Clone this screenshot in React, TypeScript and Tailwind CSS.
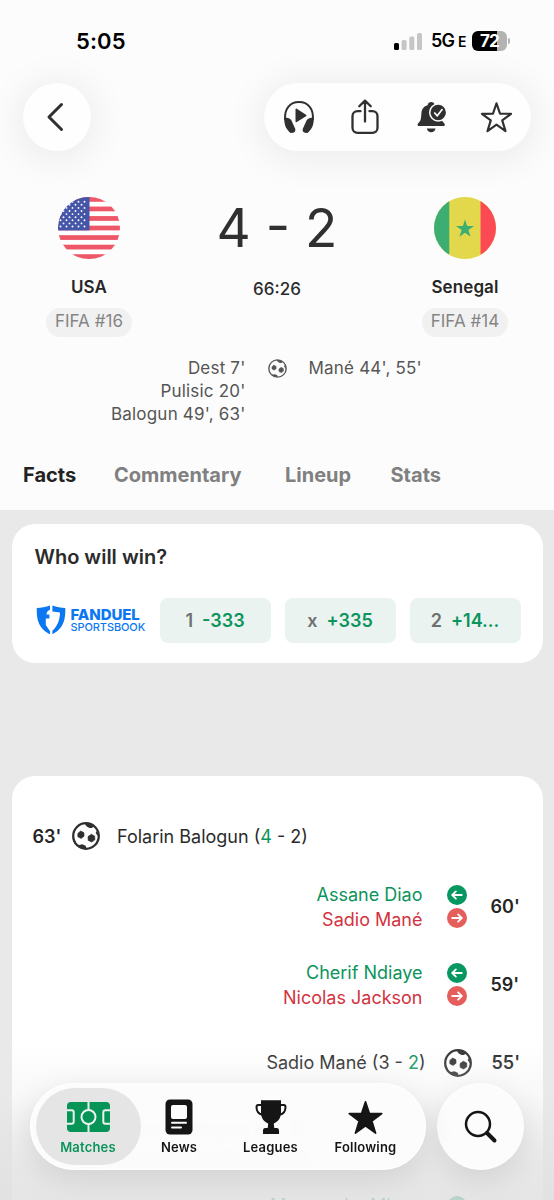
import type { ReactNode } from "react";

function Ball({ size, color = "#2f2f2f", stroke = 2.3 }: { size: number; color?: string; stroke?: number }) {
  return (
    <svg width={size} height={size} viewBox="0 0 28 28" fill={color} className="block shrink-0">
      <circle cx="14" cy="14" r="12.8" fill="none" stroke={color} strokeWidth={stroke} />
      <path d="M5.8 11.4 8.6 9l3.3 1.6.2 3.6-3 2.2-3.3-1.6z" stroke={color} strokeWidth=".6" strokeLinejoin="round" />
      <path d="m16 14.6 3.3-2.4 3.4 1.8.2 3.8-3.2 2.3-3.5-1.7z" stroke={color} strokeWidth=".6" strokeLinejoin="round" />
      <path d="M12.6 1.6c3.4-.5 6.400.3 9 2.400l-1.400 1.900-2.700.100-2.800-1.600z" />
      <path d="m4.300 22.400 2.900.6 3-.7 3.500 1.500.7 2.500c-3.700.500-7.300-.6-10.100-3.900z" />
      <path d="m25.200 8.500-1.600 2.400 2.900 4zM1.600 16l1.900 3.600L4 22z" />
    </svg>
  );
}

function Headphones() {
  return (
    <svg width="32" height="34" viewBox="0 0 32 34" fill="#303030" className="block">
      <path d="M2.200 20C1 8.800 7 2.100 16 2.100S31 8.800 29.800 20" fill="none" stroke="#303030" strokeWidth="2" />
      <path d="M1.200 17.500c2.600.2 5.300.6 7 2.500l4 8.700c.6 1.800-.2 3.500-2.200 4l-2.500.2C3.700 29.800 1 25.800 1.200 17.500z" />
      <path d="M30.800 17.500c-2.600.2-5.300.6-7 2.500l-4 8.700c-.6 1.800.2 3.500 2.200 4l2.500.2c3.800-3.100 6.500-7.100 6.300-15.400z" />
      <path d="M12.500 9.500v11.700c0 .8.700 1.200 1.300.8l9.200-5.700c.6-.4.6-1.200 0-1.600l-9.200-6c-.6-.4-1.300 0-1.300.8z" />
    </svg>
  );
}

function Share() {
  return (
    <svg width="30" height="36" viewBox="0 0 30 36" fill="none" stroke="#303030" strokeWidth="2.300" strokeLinecap="round" strokeLinejoin="round" className="block">
      <path d="M10.500 12.200H7.500a5 5 0 0 0-5 5v11.600a5 5 0 0 0 5 5h15a5 5 0 0 0 5-5V17.200a5 5 0 0 0-5-5h-3M15 22.500V2M9.300 7.300 15 1.600l5.700 5.700" />
    </svg>
  );
}

function BellCheck() {
  return (
    <svg width="32" height="32" viewBox="0 0 32 32" className="block">
      <path d="M1.600 23.800c0-1 .6-1.600 1.500-2.500 2-2 2-4.500 2.300-9 .3-4.300 2.700-7 6.200-8 .4-2 1.700-3.200 3.600-3.200s3.200 1.200 3.600 3.200c4.200 1.300 5.700 4.500 5.900 9.200.2 4 .6 5.800 2.600 7.800.8.900 1.500 1.500 1.500 2.500 0 .8-.5 1.200-1.400 1.200H3c-.9 0-1.400-.4-1.400-1.200z" fill="#303030" />
      <path d="M10.800 27.500h8.800c-.6 2.500-2.200 3.700-4.400 3.700s-3.800-1.200-4.400-3.700z" fill="#303030" />
      <circle cx="22.200" cy="11.500" r="9.200" fill="#fdfdfd" />
      <circle cx="22.200" cy="11.500" r="7.700" fill="#303030" />
      <path d="m18.700 12 2.600 2.800 4.800-6.200" fill="none" stroke="#fff" strokeWidth="1.700" strokeLinecap="round" strokeLinejoin="round" />
    </svg>
  );
}

function Star({ size, filled }: { size: number; filled?: boolean }) {
  return (
    <svg width={size} height={size} viewBox="0 0 34 34" fill={filled ? "#151515" : "none"} stroke={filled ? "#151515" : "#303030"} strokeWidth={filled ? 1.600 : 2.200} strokeLinejoin="round" className="block">
      <path d={filled ? "M17 1.800 20.800 13.100 32.800 13.200 23.200 20.400 26.800 32.200 17 25 7.200 32.200 10.800 20.400 1.200 13.200 13.200 13.100z" : "M17 2.300 20.600 13 32 13.200 22.900 20 26.300 31 17 24.400 7.700 31 11.100 20 2 13.200 13.400 13z"} />
    </svg>
  );
}

function UsaFlag() {
  const rows = [0, 1, 2, 3, 4, 5, 6, 7, 8];
  return (
    <svg width="62" height="62" viewBox="0 0 62 62" className="block">
      <clipPath id="usa"><circle cx="31" cy="31" r="31" /></clipPath>
      <g clipPath="url(#usa)">
        <rect width="62" height="62" fill="#fff" />
        {[0, 9.540, 19.080, 28.620, 38.160, 47.700, 57.240].map((y) => <rect key={y} y={y} width="62" height="4.770" fill="#ee5768" />)}
        <rect width="31.500" height="33.400" fill="#4556a8" />
        {rows.map((r) => [0, 1, 2, 3, 4].map((c) => (
          <circle key={r + "-" + c} cx={(r % 2 ? -0.500 : 2.500) + c * 6} cy={4.700 + r * 3.100} r=".95" fill="#fff" />
        )))}
      </g>
    </svg>
  );
}

function SenegalFlag() {
  return (
    <svg width="62" height="62" viewBox="0 0 62 62" className="block">
      <clipPath id="sen"><circle cx="31" cy="31" r="31" /></clipPath>
      <g clipPath="url(#sen)">
        <rect width="62" height="62" fill="#e3d84c" />
        <rect width="15.300" height="62" fill="#3dae72" />
        <rect x="46.500" width="16" height="62" fill="#fc4a54" />
        <path d="m31 22.500 2.100 6.400h6.900l-5.600 4 2.200 6.900L31 35.800l-5.600 4 2.200-6.900-5.600-4h6.900z" fill="#3dae72" />
      </g>
    </svg>
  );
}

function FanDuelShield() {
  return (
    <svg width="30" height="30" viewBox="0 0 30 30" fill="#0b78f2" className="block shrink-0">
      <path d="M.8 3C5.300 2.900 9.800 2.100 14 .6V4.800c-1.600.6-2.900 1.500-3.300 3.400l-.3 1.300h3v4.100H9.800V20l4.200 6.300v3C6 25 .1 19.200.8 3z" />
      <path d="M16.400.6c4.200 1.500 8.400 2.300 12.900 2.400.6 16.200-5 22-12.900 26.300v-3.500c5-4.600 7.400-10.500 7.600-18.300l-7.600-1z" />
    </svg>
  );
}

function SubArrow({ out }: { out?: boolean }) {
  return (
    <svg width="20" height="20" viewBox="0 0 20 20" className="block">
      <circle cx="10" cy="10" r="10" fill={out ? "#e55e5b" : "#079760"} />
      <path d={out ? "M5.200 10h9.400M11.100 6.400l3.700 3.600-3.700 3.600" : "M14.800 10H5.400M8.900 6.400 5.200 10l3.700 3.600"} fill="none" stroke="#fff" strokeWidth="1.800" strokeLinecap="round" strokeLinejoin="round" />
    </svg>
  );
}

function Team({ flag, name, rank }: { flag: ReactNode; name: string; rank: string }) {
  return (
    <div className="flex w-[100px] flex-col items-center">
      {flag}
      <div className="mt-[18px] h-5 text-[17px] leading-5 font-semibold tracking-[0.1px] text-[#262626]">{name}</div>
      <div className="mt-[10.500px] flex h-[29px] w-[86px] items-center justify-center rounded-full bg-[#f1f1f1] text-[17px] tracking-[0.05px] text-[#858585]">{rank}</div>
    </div>
  );
}

function Odd({ label, value }: { label: string; value: string }) {
  return (
    <div className="flex h-[45px] w-[111px] items-center justify-center gap-[9px] rounded-lg bg-[#eaf3f0] text-[18px] font-semibold text-[#0b945b]">
      <span className="text-[#707070]">{label}</span>
      <span>{value}</span>
    </div>
  );
}

function SubRow({ on, off, minute }: { on: string; off: string; minute: string }) {
  return (
    <div className="flex h-[78px] items-center justify-end">
      <div className="text-right text-[18px] leading-[25px] tracking-[0px]">
        <div className="text-[#0b945b]">{on}</div>
        <div className="text-[#d3333e]">{off}</div>
      </div>
      <div className="ml-6 flex flex-col gap-[3px]"><SubArrow /><SubArrow out /></div>
      <div className="ml-[24px] w-[30px] text-[18px] font-semibold text-[#262626]">{minute}</div>
    </div>
  );
}

function NavItem({ icon, label, className, active }: { icon: ReactNode; label: string; className: string; active?: boolean }) {
  return (
    <div className={"flex h-[77px] shrink-0 flex-col items-center rounded-full pt-[11px] " + className}>
      <div className="flex h-[36px] items-center">{icon}</div>
      <div className={"mt-[4px] text-[13px] leading-4 font-semibold tracking-[0.2px] " + (active ? "text-[#0b945b]" : "text-[#151515]")}>{label}</div>
    </div>
  );
}

export default function App() {
  return (
    <div className="relative flex h-[1200px] w-[554px] flex-col overflow-hidden bg-[#e9e9e9] font-['Inter',sans-serif] whitespace-nowrap text-[#2b2b2b]">
      <header className="h-[509.500px] shrink-0 bg-[#fcfcfc]">
        <div className="flex h-[83px] justify-between pr-[44px] pl-[76px]">
          <div className="mt-[27px] h-7 text-[22px] leading-7 font-semibold tracking-[0.1px] text-black">5:05</div>
          <div className="mt-[31px] flex h-5 items-center">
            <svg width="28" height="19" viewBox="0 0 28 19" className="block">
              <rect x="0" y="11" width="5" height="7" rx="1.500" fill="#000" />
              <rect x="7.600" y="8" width="5" height="10" rx="1.500" fill="#c6c6c6" />
              <rect x="15.300" y="4.500" width="5" height="13.500" rx="1.500" fill="#c6c6c6" />
              <rect x="23" y="1" width="5" height="17" rx="1.500" fill="#c6c6c6" />
            </svg>
            <div className="ml-[9px] flex w-[41px] items-baseline text-[18px] leading-5 font-semibold tracking-[-0.9px] text-black">5G<span className="ml-[4px] text-[14px]">E</span></div>
            <div className="flex h-5 w-[35px] overflow-hidden rounded-[6px] bg-[linear-gradient(90deg,#000_72%,#b3b3b3_72%)] pl-[8px] text-[17px] leading-5 font-bold tracking-[-0.8px] text-white">72</div>
            <div className="ml-[1px] h-[6px] w-[2px] rounded-r-full bg-[#b3b3b3]" />
          </div>
        </div>
        <div className="flex justify-between pr-[23px] pl-[22.500px]">
          <div className="flex size-[68px] items-center justify-center rounded-full bg-[#fefefe] shadow-[0_4px_34px_8px_rgba(0,0,0,0.06)]">
            <svg width="18" height="30" viewBox="0 0 18 30" fill="none" stroke="#303030" strokeWidth="3" strokeLinecap="round" strokeLinejoin="round" className="mr-[3px] block"><path d="M15.500 2.500 3 15l12.500 12.500" /></svg>
          </div>
          <div className="flex h-[68px] w-[267.500px] items-center rounded-full bg-[#fefefe] pl-[19px] shadow-[0_4px_34px_8px_rgba(0,0,0,0.06)]">
            <Headphones />
            <div className="ml-[35px]"><Share /></div>
            <div className="ml-[36px]"><BellCheck /></div>
            <div className="ml-[32px]"><Star size={33} /></div>
          </div>
        </div>
        <div className="mt-[46px] flex h-[141px] justify-between px-[39px]">
          <Team flag={<UsaFlag />} name="USA" rank="FIFA #16" />
          <div className="flex flex-col items-center">
            <div className="mt-[1px] h-[60px] text-[53px] leading-[60px] tracking-[0px] text-[#303030]">4 - 2</div>
            <div className="mt-[21px] h-5 text-[17px] leading-5 font-medium">66:26</div>
          </div>
          <Team flag={<SenegalFlag />} name="Senegal" rank="FIFA #14" />
        </div>
        <div className="mt-[19px] flex h-[70px] text-[17px] leading-[23px] tracking-[0.2px] text-[#555]">
          <div className="w-[245.500px] text-right"><div>Dest 7'</div><div>Pulisic 20'</div><div>Balogun 49', 63'</div></div>
          <div className="mt-[2px] ml-[22px]"><Ball size={19} color="#555" stroke={2} /></div>
          <div className="ml-[22px]">Mané 44', 55'</div>
        </div>
        <div className="mt-[34px] flex h-[28px] pl-[23px] text-[20px] leading-7 font-bold text-[#808080]">
          <div className="w-[91px] text-[#222]">Facts</div>
          <div className="w-[171px]">Commentary</div>
          <div className="w-[105.500px]">Lineup</div>
          <div>Stats</div>
        </div>
      </header>

      <section className="mt-[14px] ml-[11.500px] h-[139.500px] w-[531px] shrink-0 rounded-[23px] bg-white">
        <h2 className="pt-[20px] pl-[23px] text-[20px] leading-[26px] font-semibold">Who will win?</h2>
        <div className="mt-[28px] flex items-center pl-[24px]">
          <FanDuelShield />
          <div className="ml-[5px] w-[89px] text-[#0b78f2]">
            <div className="text-[15px] leading-[14px] font-extrabold tracking-[-0.1px]">FANDUEL</div>
            <div className="text-[11px] leading-[11px] font-medium tracking-[-0.1px]">SPORTSBOOK</div>
          </div>
          <div className="flex gap-[14px]"><Odd label="1" value="-333" /><Odd label="x" value="+335" /><Odd label="2" value="+14..." /></div>
        </div>
      </section>

      <section className="mt-[113px] ml-[11.500px] h-[460px] w-[531px] shrink-0 rounded-t-[23px] bg-white pr-[22px] pl-[21px]">
        <div className="flex h-[94px] items-center pt-[26px] text-[18px]">
          <div className="w-[39.500px] font-semibold text-[#262626]">63'</div>
          <Ball size={28} />
          <div className="ml-[17px]">Folarin Balogun (<span className="text-[#0b945b]">4</span> - 2)</div>
        </div>
        <div className="h-[-2px]" />
        <div className="mt-[-2.500px]"><SubRow on="Assane Diao" off="Sadio Mané" minute="60'" /></div>
        <SubRow on="Cherif Ndiaye" off="Nicolas Jackson" minute="59'" />
        <div className="flex h-[78px] items-center justify-end text-[18px]">
          <div>Sadio Mané (3 - <span className="text-[#0b945b]">2</span>)</div>
          <div className="ml-[18px]"><Ball size={28} /></div>
          <div className="ml-[20px] w-[29px] font-semibold text-[#262626]">55'</div>
        </div>
        <div className="mt-[14px] ml-[84.500px] h-[54px] text-[18px] leading-[27px] opacity-60">
          <div>Folarin Balogun (3 - 1)</div>
          <div className="text-[#858585]">assist by Malik Tillman</div>
        </div>
        <div className="mt-[9px]"><SubRow on="Moustapha Mbow" off="Ismail Jakobs" minute="46'" /></div>
      </section>

      <div className="absolute inset-x-0 bottom-0 h-[160px] bg-[linear-gradient(180deg,rgba(232,232,232,0)_0%,rgba(232,232,232,0.3)_35%,rgba(226,226,226,0.8)_80%,rgba(224,224,224,0.83)_100%)]" />
      <nav className="absolute bottom-[30px] left-[29.500px] flex gap-[11px]">
        <div className="flex h-[87px] w-[396.500px] items-center rounded-full border border-white bg-[#fcfcfc]/96 pl-[5px] shadow-[0_8px_30px_rgba(0,0,0,0.10)] backdrop-blur-[2px]">
          <NavItem active className="w-[105px] bg-[#e5e5e5]" label="Matches" icon={
            <svg width="43" height="30" viewBox="0 0 43 30" className="block">
              <rect width="43" height="30" rx="4" fill="#079457" />
              <g fill="none" stroke="#eaf3ee" strokeWidth="2"><path d="M21.500 0v8M21.500 22v8M0 8.200h4.700a2 2 0 0 1 2 2v9.600a2 2 0 0 1-2 2H0M43 8.200h-4.700a2 2 0 0 0-2 2v9.600a2 2 0 0 0 2 2H43" /><circle cx="21.500" cy="15" r="7" /></g>
            </svg>} />
          <NavItem className="w-[77px]" label="News" icon={
            <svg width="28" height="36" viewBox="0 0 28 36" className="block">
              <rect x=".5" y=".5" width="27" height="35" rx="4.500" fill="#151515" />
              <rect x="6" y="6" width="16" height="14" rx="2" fill="#fcfcfc" />
              <path d="M7 23.700h14M7 28.500h9" stroke="#fcfcfc" strokeWidth="2" strokeLinecap="round" />
            </svg>} />
          <NavItem className="w-[106px]" label="Leagues" icon={
            <svg width="32" height="36" viewBox="0 0 32 36" className="block">
              <path d="M6 1.200h20v12c0 6-3 9.500-7.200 11.200l.5 4.600h2.500c1.500 0 2.200 1 2.200 2.500V35H8v-3.500C8 30 8.700 29 10.200 29h2.500l.5-4.600C9 22.700 6 19.200 6 13.200z" fill="#151515" />
              <path d="M7 6H3.200C2 6 1.500 6.600 1.500 8c0 4 2.300 7 6 7.700M25 6h3.800c1.200 0 1.700.6 1.700 2 0 4-2.300 7-6 7.700" fill="none" stroke="#151515" strokeWidth="2" />
            </svg>} />
          <NavItem className="w-[84px]" label="Following" icon={<Star size={35} filled />} />
        </div>
        <div className="flex size-[87px] items-center justify-center rounded-full border border-white bg-[#fcfcfc] shadow-[0_8px_30px_rgba(0,0,0,0.10)]">
          <svg width="34" height="34" viewBox="0 0 34 34" fill="none" stroke="#151515" strokeLinecap="round" className="block">
            <circle cx="14" cy="14" r="12" strokeWidth="2.500" /><path d="m23 23 7.500 7.500" strokeWidth="4" />
          </svg>
        </div>
      </nav>
    </div>
  );
}
